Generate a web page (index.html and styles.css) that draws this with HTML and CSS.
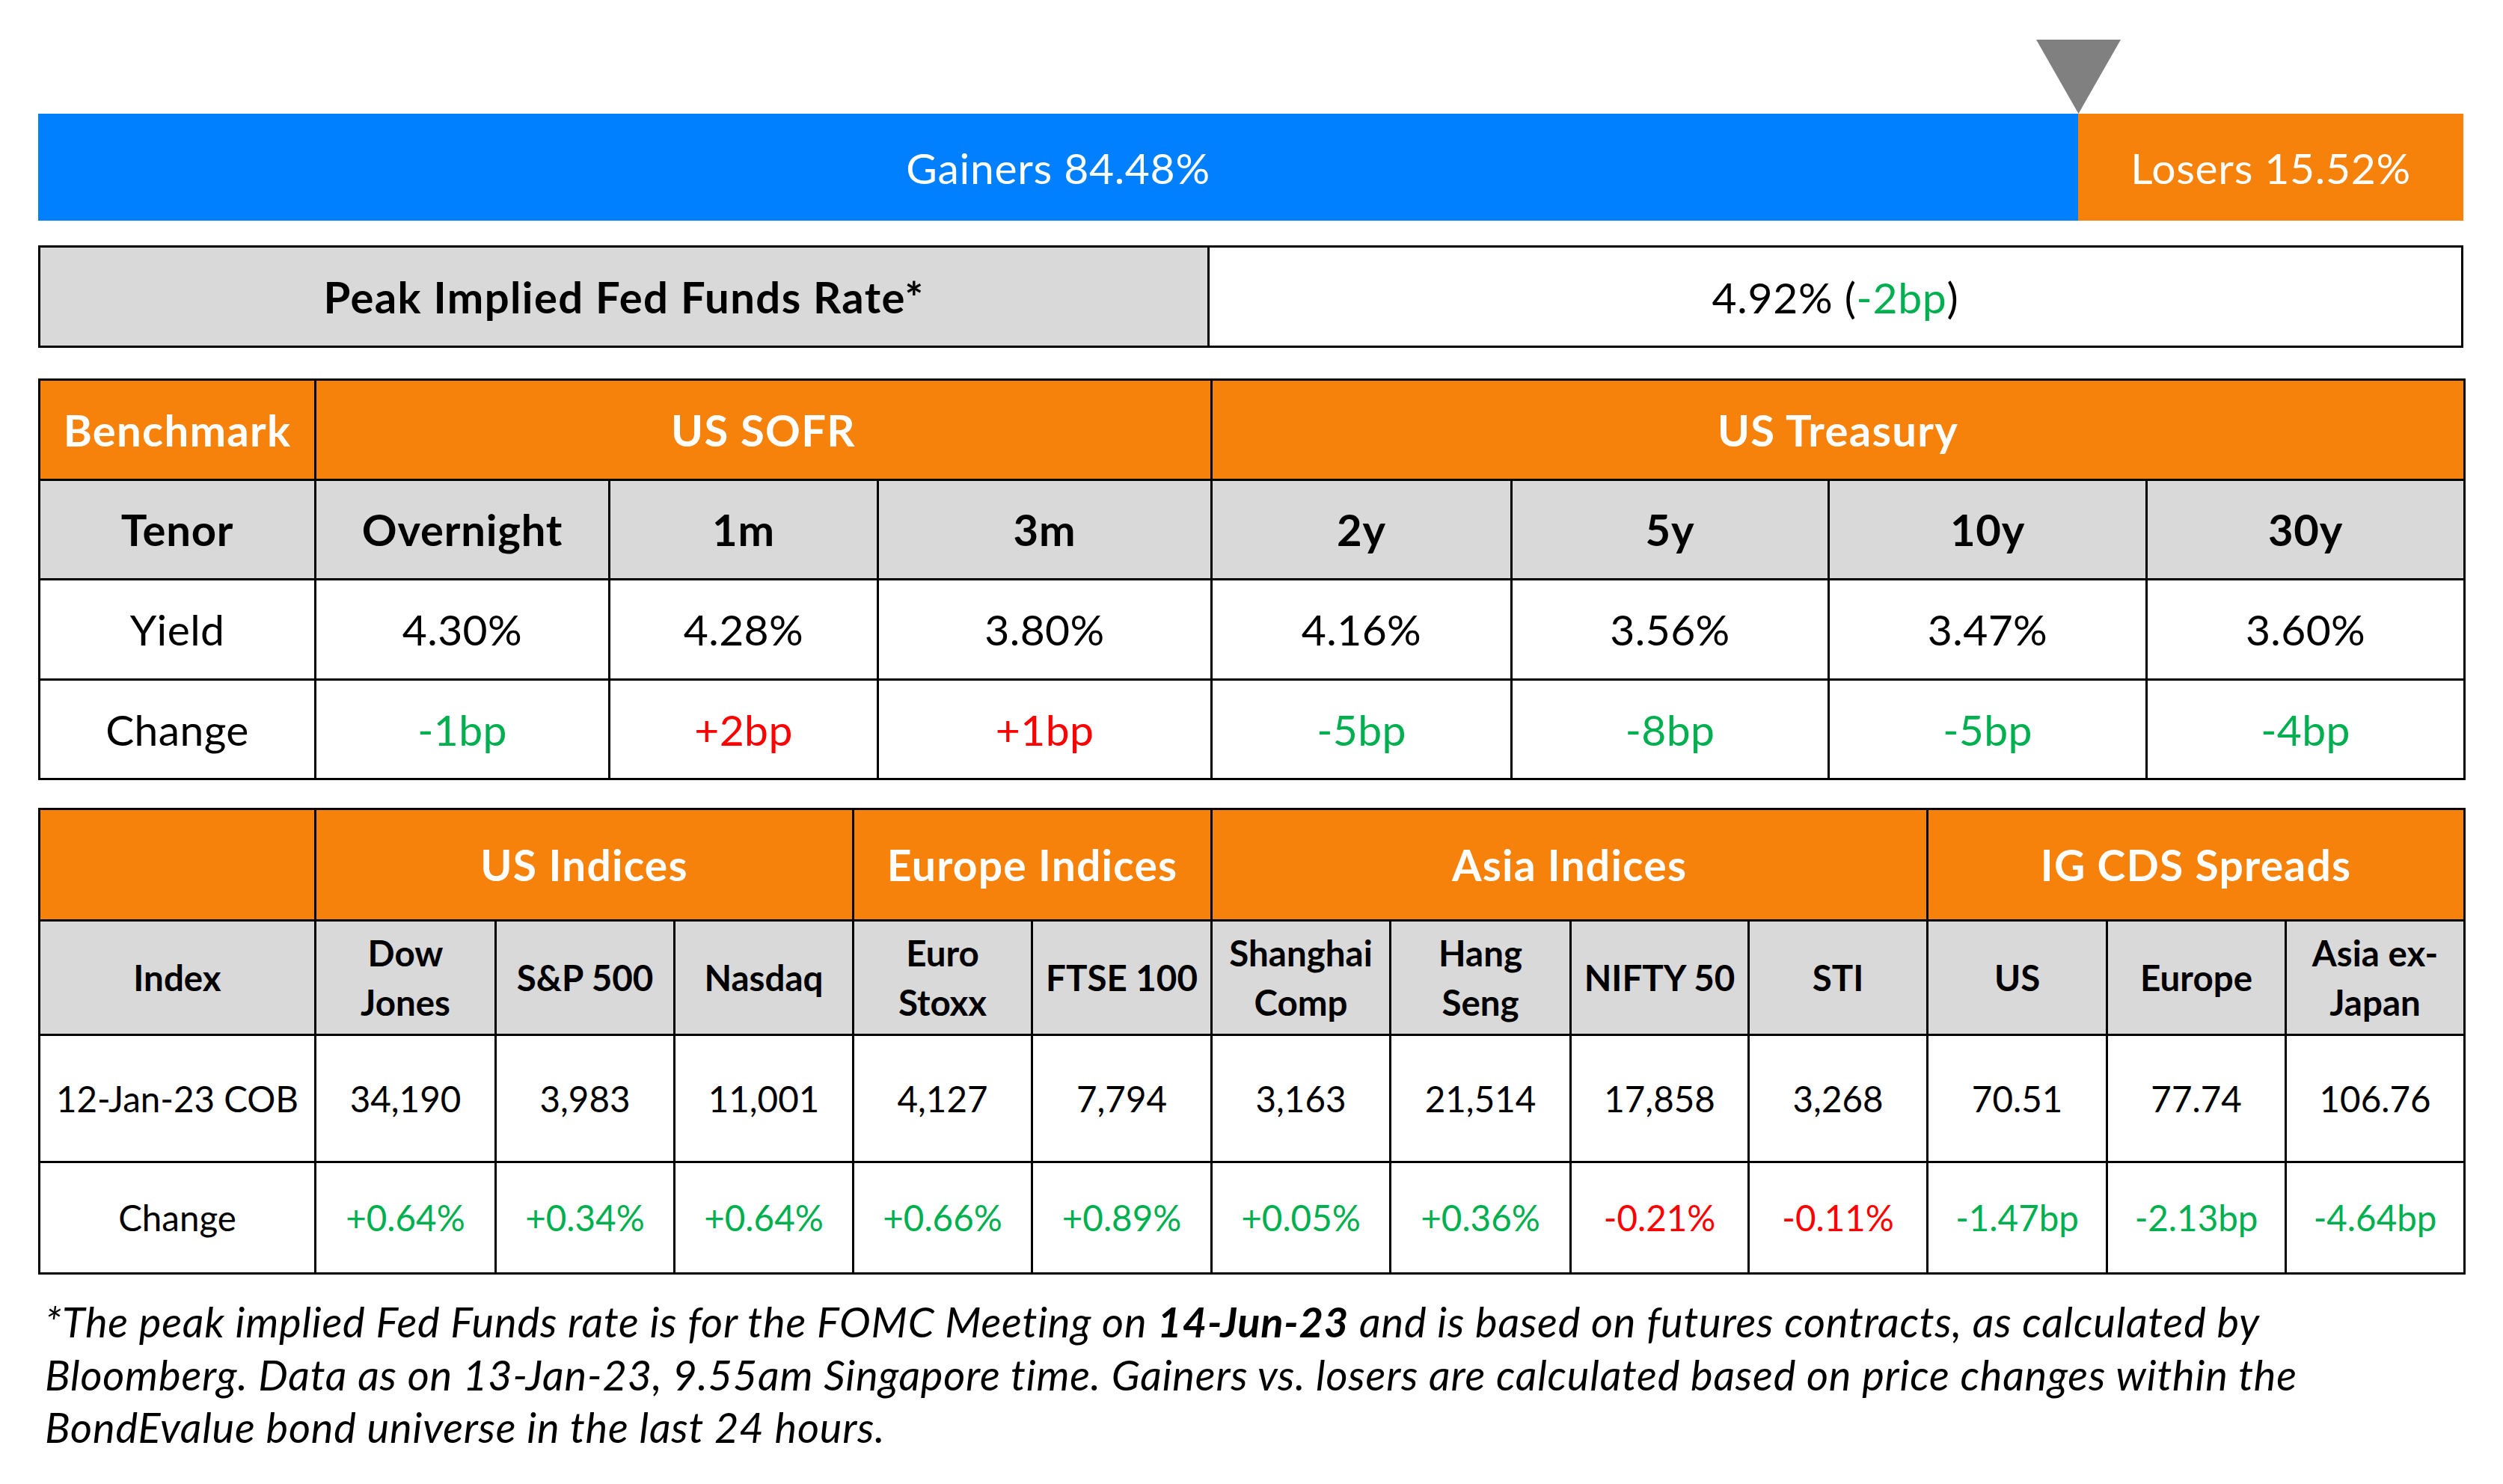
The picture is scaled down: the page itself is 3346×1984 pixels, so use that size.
FILE: index.html
```html
<!DOCTYPE html>
<html lang="en">
<head>
<meta charset="utf-8">
<title>Market snapshot</title>
<link rel="stylesheet" href="styles.css">
</head>
<body>
<div class="page">
  <div class="bar">
    <svg class="marker" style="left: 84.12%" width="113" height="99" viewBox="0 0 113 99"><polygon points="0,0 113,0 56.5,99" fill="#808080"/></svg>
    <div class="gainers" style="width: 84.12%">Gainers 84.48%</div>
    <div class="losers">Losers 15.52%</div>
  </div>

  <div class="peak">
    <div class="peak-label">Peak Implied Fed Funds Rate*</div>
    <div class="peak-value">4.92% (<span class="up">-2bp</span>)</div>
  </div>

  <table class="bench">
    <colgroup>
      <col class="c369"><col class="c393"><col class="c359"><col class="c446"><col class="c401"><col class="c424"><col class="c425"><col class="c425">
    </colgroup>
    <tr class="head">
      <td>Benchmark</td>
      <td colspan="3">US SOFR</td>
      <td colspan="4">US Treasury</td>
    </tr>
    <tr class="sub">
      <td>Tenor</td><td>Overnight</td><td>1m</td><td>3m</td><td>2y</td><td>5y</td><td>10y</td><td>30y</td>
    </tr>
    <tr>
      <td>Yield</td><td>4.30%</td><td>4.28%</td><td>3.80%</td><td>4.16%</td><td>3.56%</td><td>3.47%</td><td>3.60%</td>
    </tr>
    <tr>
      <td>Change</td><td class="up">-1bp</td><td class="down">+2bp</td><td class="down">+1bp</td><td class="up">-5bp</td><td class="up">-8bp</td><td class="up">-5bp</td><td class="up">-4bp</td>
    </tr>
  </table>

  <table class="indices">
    <colgroup>
      <col class="c369"><col class="c241"><col class="c239"><col class="c239"><col class="c239"><col class="c240"><col class="c239"><col class="c241"><col class="c238"><col class="c239"><col class="c240"><col class="c239"><col class="c239">
    </colgroup>
    <tr class="head">
      <td></td>
      <td colspan="3">US Indices</td>
      <td colspan="2">Europe Indices</td>
      <td colspan="4">Asia Indices</td>
      <td colspan="3">IG CDS Spreads</td>
    </tr>
    <tr class="sub">
      <td>Index</td><td>Dow<br>Jones</td><td>S&amp;P 500</td><td>Nasdaq</td><td>Euro<br>Stoxx</td><td>FTSE 100</td><td>Shanghai<br>Comp</td><td>Hang<br>Seng</td><td>NIFTY 50</td><td>STI</td><td>US</td><td>Europe</td><td>Asia ex-<br>Japan</td>
    </tr>
    <tr class="vals">
      <td>12-Jan-23 COB</td><td>34,190</td><td>3,983</td><td>11,001</td><td>4,127</td><td>7,794</td><td>3,163</td><td>21,514</td><td>17,858</td><td>3,268</td><td>70.51</td><td>77.74</td><td>106.76</td>
    </tr>
    <tr class="chg">
      <td>Change</td><td class="up">+0.64%</td><td class="up">+0.34%</td><td class="up">+0.64%</td><td class="up">+0.66%</td><td class="up">+0.89%</td><td class="up">+0.05%</td><td class="up">+0.36%</td><td class="down">-0.21%</td><td class="down">-0.11%</td><td class="up">-1.47bp</td><td class="up">-2.13bp</td><td class="up">-4.64bp</td>
    </tr>
  </table>

  <p class="note">*The peak implied Fed Funds rate is for the FOMC Meeting on <b>14-Jun-23</b> and is based on futures contracts, as calculated by<br>Bloomberg. Data as on 13-Jan-23, 9.55am Singapore time. Gainers vs. losers are calculated based on price changes within the<br>BondEvalue bond universe in the last 24 hours.</p>
</div>
</body>
</html>
```

FILE: styles.css
```css
html, body {
  margin: 0;
  padding: 0;
  background: #ffffff;
}
body {
  font-family: Lato, "Liberation Sans", sans-serif;
  color: #000000;
}
.page {
  width: 3242px;
  padding: 152px 53px 40px 51px;
}

/* gainers / losers bar */
.bar {
  position: relative;
  display: flex;
  height: 143px;
  color: #ffffff;
  font-size: 57px;
  letter-spacing: 0.7px;
}
.marker {
  position: absolute;
  bottom: 100%;
  margin-left: -56.5px;
  display: block;
}
.gainers {
  background: #0080ff;
  display: flex;
  align-items: center;
  justify-content: center;
}
.losers {
  flex: 1;
  background: #f7820b;
  display: flex;
  align-items: center;
  justify-content: center;
}

/* peak implied rate */
.peak {
  margin-top: 33px;
  display: grid;
  grid-template-columns: 1563px 1fr;
  height: 137px;
  box-sizing: border-box;
  border: 3px solid #000000;
  font-size: 57px;
  letter-spacing: 0.7px;
}
.peak-label {
  background: #d9d9d9;
  font-weight: 700;
  font-size: 58px;
  letter-spacing: 1.4px;
  border-right: 3px solid #000000;
  display: flex;
  align-items: center;
  justify-content: center;
}
.peak-value {
  display: flex;
  align-items: center;
  justify-content: center;
}

.up { color: #00b050; }
.down { color: #ff0000; }

/* tables */
table {
  width: 3242px;
  border-collapse: collapse;
  table-layout: fixed;
  text-align: center;
}
td {
  border: 3px solid #000000;
  padding: 0;
  vertical-align: middle;
}
.head td {
  background: #f7820b;
  color: #ffffff;
  font-weight: 700;
}
.sub td {
  background: #d9d9d9;
  font-weight: 700;
}

.c369 { width: 369px; }
.c393 { width: 393px; }
.c359 { width: 359px; }
.c446 { width: 446px; }
.c401 { width: 401px; }
.c424 { width: 424px; }
.c425 { width: 425px; }
.c238 { width: 238px; }
.c239 { width: 239px; }
.c240 { width: 240px; }
.c241 { width: 241px; }

.bench {
  margin-top: 41px;
  font-size: 57px;
  letter-spacing: 0.4px;
}
.bench tr { height: 133.5px; }
.bench .head td {
  font-size: 58px;
  letter-spacing: 1.3px;
}
.bench .sub td {
  font-size: 58px;
  letter-spacing: 0.8px;
}

.indices {
  margin-top: 37px;
  font-size: 47.5px;
  line-height: 66px;
}
.indices .head { height: 149px; }
.indices .head td {
  font-size: 57px;
  letter-spacing: 1.2px;
}
.indices .sub { height: 153px; }
.indices .vals { height: 170px; }
.indices .chg { height: 149px; }

/* footnote */
.note {
  margin: 28px 0 0 9px;
  font-style: italic;
  font-size: 56px;
  letter-spacing: 0.8px;
  line-height: 70.5px;
}
.note b { font-weight: 700; }
```
